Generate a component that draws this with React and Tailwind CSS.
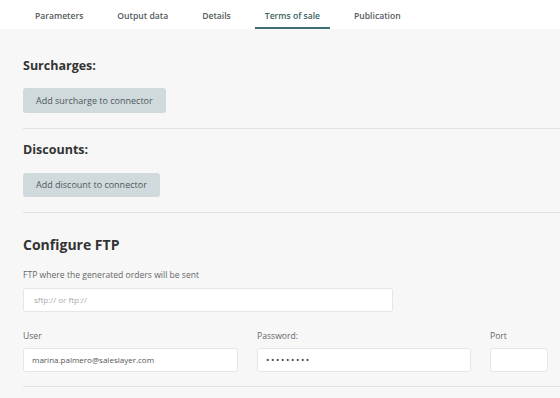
export default function App() {
  const tabs = ["Parameters", "Output data", "Details", "Terms of sale", "Publication"];
  return (
    <div className="w-[560px] h-[398px] overflow-hidden bg-[#f7f7f7] text-[#333]" style={{ fontFamily: '"Open Sans", sans-serif' }}>
      <div className="h-[29px] bg-white flex pl-[25px] gap-[14px]">
        {tabs.map((t) => (
          <div
            key={t}
            className={
              "px-[10px] h-[29px] pt-[5px] flex items-center text-[8.6px] font-semibold border-b-2 " +
              (t === "Terms of sale" ? "border-[#3f6f70] text-[#3d5f60]" : "border-transparent text-[#555c5e]")
            }
          >
            {t}
          </div>
        ))}
      </div>
      <div className="pl-[23px]">
        <div className="pt-[27px] pb-[15px] border-b border-[#e3e3e3]">
          <div className="text-[12.5px] font-bold leading-[20px] text-[#333]">Surcharges:</div>
          <button className="mt-[12px] h-[25px] px-[13px] rounded-[3px] bg-[#d0dadd] text-[9px] text-[#4d585c]">
            Add surcharge to connector
          </button>
        </div>
        <div className="pt-[11px] pb-[15px] border-b border-[#e3e3e3]">
          <div className="text-[12.5px] font-bold leading-[20px] text-[#333]">Discounts:</div>
          <button className="mt-[13px] h-[24px] px-[13px] rounded-[3px] bg-[#d0dadd] text-[9px] text-[#4d585c]">
            Add discount to connector
          </button>
        </div>
        <div className="pt-[22px] pb-[14px] border-b border-[#e3e3e3]">
          <div className="text-[14px] font-bold leading-[20px] text-[#333]">Configure FTP</div>
          <div className="mt-[14px] text-[8.6px] leading-[12px] text-[#666]">FTP where the generated orders will be sent</div>
          <div className="mt-[7px] w-[370px] h-[24px] bg-white border border-[#e6e6e6] rounded-[3px] flex items-center px-[10px] text-[8px] text-[#aaa]">
            sftp:// or ftp://
          </div>
          <div className="mt-[18px] flex">
            <div className="w-[234px]">
              <div className="text-[8.6px] leading-[12px] text-[#666]">User</div>
              <div className="mt-[6px] w-[215px] h-[24px] bg-white border border-[#e6e6e6] rounded-[3px] flex items-center px-[8px] text-[8px] text-[#555]">
                marina.palmero@saleslayer.com
              </div>
            </div>
            <div className="w-[233px]">
              <div className="text-[8.6px] leading-[12px] text-[#666]">Password:</div>
              <div className="mt-[6px] w-[214px] h-[24px] bg-white border border-[#e6e6e6] rounded-[3px] flex items-center px-[8px] text-[9px] tracking-[1.6px] text-[#444]">
                •••••••••
              </div>
            </div>
            <div>
              <div className="text-[8.6px] leading-[12px] text-[#666]">Port</div>
              <div className="mt-[6px] w-[58px] h-[24px] bg-white border border-[#e6e6e6] rounded-[3px]"></div>
            </div>
          </div>
        </div>
      </div>
    </div>
  );
}
